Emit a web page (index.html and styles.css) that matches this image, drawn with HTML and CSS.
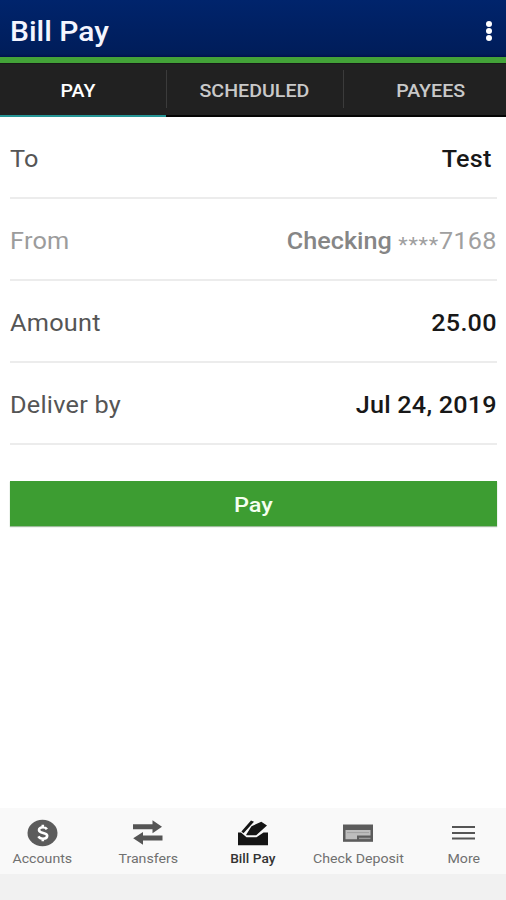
FILE: index.html
```
<!DOCTYPE html>
<html lang="en">

<head>
    <meta charset="UTF-8">
    <meta name="viewport" content="width=device-width, initial-scale=1.0">
    <title>Bill Pay</title>
    <link rel="stylesheet" href="styles.css">
</head>

<body>
    <header class="header">
        <h1 class="title">Bill Pay</h1>
        <button class="menu-btn" aria-label="Menu">
            <span class="dot"></span>
            <span class="dot"></span>
            <span class="dot"></span>
        </button>
    </header>

    <nav class="tabs">
        <a class="tab active" href="#"><span class="tab-text">PAY</span></a>
        <a class="tab" href="#"><span class="tab-text">SCHEDULED</span></a>
        <a class="tab tab-last" href="#"><span class="tab-text">PAYEES</span></a>
    </nav>

    <main class="content">
        <div class="row">
            <span class="label">To</span>
            <span class="value test">Test</span>
        </div>
        <div class="row disabled">
            <span class="label">From</span>
            <span class="value account"><span class="account-name">Checking</span> <span class="stars">****</span>7168</span>
        </div>
        <div class="row">
            <span class="label">Amount</span>
            <span class="value">25.00</span>
        </div>
        <div class="row">
            <span class="label">Deliver by</span>
            <span class="value">Jul 24, 2019</span>
        </div>
        <button class="pay-btn"><span class="pay-text">Pay</span></button>
    </main>

    <nav class="bottom-nav">
        <a class="nav-item" href="#">
            <svg class="icon" width="32" height="28" viewBox="0 0 32 28">
                <ellipse cx="15.5" cy="14" rx="15" ry="13.2" fill="#5c5c5c" />
                <path d="M19.9 10.3c-.8-1.3-2.2-2-4-2-2.3 0-3.9 1-3.9 2.7 0 4 8.2 1.9 8.2 5.8 0 1.8-1.7 2.9-4.2 2.9-2.1 0-3.7-.8-4.6-2.3M15.8 5.8v3M15.8 19v3.2" fill="none" stroke="#fff" stroke-width="2.6" />
            </svg>
            <span class="nav-text">Accounts</span>
        </a>
        <a class="nav-item" href="#">
            <svg class="icon" width="32" height="28" viewBox="0 0 32 28">
                <path d="M1 5.2h19.5V1.3L30 7.8l-9.5 6.4v-4H1zM30.5 16.6H11v-3.7L1.2 19.3l9.8 6.4v-4.1h19.5z" fill="#555" />
            </svg>
            <span class="nav-text">Transfers</span>
        </a>
        <a class="nav-item current" href="#">
            <svg class="icon" width="32" height="28" viewBox="0 0 32 28">
                <path d="M1 13.5h3l5.5 4.8h10l7-4.8H31v12.7H1z" fill="#151515" />
                <path d="M9.3 15.5L14.5 7.2l9.8-4.4 5.7 3.8-10.8 9.6H9.3zM4.4 12.4L14 1.5l3 1.2L6.5 14.2z" fill="#151515" />
            </svg>
            <span class="nav-text">Bill Pay</span>
        </a>
        <a class="nav-item" href="#">
            <svg class="icon" width="32" height="28" viewBox="0 0 32 28">
                <path d="M1 5.5h30v17.3H1z" fill="#5c5c5c" />
                <path d="M3.5 11h25v5.5h-25zM3.5 16.5H15v3.7H3.5z" fill="#bdbdbd" />
                <path d="M5 13.6h22" stroke="#a0a0a0" />
                <path d="M17 19.4h11.5" stroke="#9b9b9b" stroke-width="1.4" />
            </svg>
            <span class="nav-text">Check Deposit</span>
        </a>
        <a class="nav-item" href="#">
            <svg class="icon" width="32" height="28" viewBox="0 0 32 28">
                <path d="M5 8h23M5 14h23M5 19.6h23" stroke="#555" stroke-width="2" />
            </svg>
            <span class="nav-text">More</span>
        </a>
    </nav>
</body>

</html>
```
FILE: styles.css
```
* {
    box-sizing: border-box;
}

body {
    margin: 0;
    height: 900px;
    display: flex;
    flex-direction: column;
    font-family: Roboto, "Liberation Sans", sans-serif;
    background-color: #fff;
    overflow: hidden;
}

a {
    text-decoration: none;
}

/* Header */
.header {
    height: 63px;
    padding: 0 14px 0 10px;
    display: flex;
    justify-content: space-between;
    align-items: center;
    background: linear-gradient(#00246c, #001d5a 54px, #00104a 57px);
    border-bottom: 6px solid #43a338;
}

.title {
    margin: 7px 0 0;
    color: #f4f5ff;
    font-size: 27px;
    font-weight: 500;
    line-height: 32px;
    transform: scaleX(1.11);
    transform-origin: left;
}

.menu-btn {
    margin-top: 5px;
    padding: 0;
    border: none;
    background: none;
    display: flex;
    flex-direction: column;
    gap: 1px;
    cursor: pointer;
}

.dot {
    width: 6px;
    height: 6px;
    border-radius: 50%;
    background: #fff;
}

/* Tabs */
.tabs {
    height: 54px;
    display: grid;
    grid-template-columns: 166px 177px 163px;
    background: #212121;
    border-top: 1px solid #161b16;
}

.tab {
    display: flex;
    align-items: center;
    justify-content: center;
    padding-top: 2px;
    color: #c9c9c9;
    font-size: 18px;
    font-weight: 500;
    border-bottom: 2px solid #050505;
    background: linear-gradient(#3b3b3b, #3b3b3b) left 6px / 1px 38px no-repeat;
}

.tab-text {
    transform: scaleX(1.09);
}

.tab.active {
    padding-right: 10px;
    color: #fff;
    border-bottom-color: #259596;
    background: none;
}

.tab-last {
    padding-left: 12px;
}

/* Payment form */
.content {
    flex: 1;
    padding: 0 9px 0 10px;
}

.row {
    height: 81.8px;
    padding-top: 5px;
    display: flex;
    justify-content: space-between;
    align-items: center;
    border-bottom: 2px solid #ececec;
    font-size: 23px;
}

.row:first-child {
    height: 82.2px;
}

.label {
    color: #555;
    letter-spacing: 0.2px;
    transform: scaleX(1.1);
    transform-origin: left;
}

.value {
    color: #181818;
    font-weight: 500;
    letter-spacing: 0.2px;
    transform: scaleX(1.095);
    transform-origin: right;
}

.test {
    margin-right: 5px;
}

.disabled .label {
    color: #9c9c9c;
}

.account {
    color: #a0a0a0;
    font-weight: 400;
}

.account-name {
    color: #868686;
    font-weight: 500;
    letter-spacing: 0;
}

.stars {
    font-size: 20px;
    line-height: 1;
    vertical-align: -3px;
    letter-spacing: 0.7px;
}

.pay-btn {
    width: 100%;
    height: 45px;
    margin-top: 36px;
    padding: 3px 0 0;
    color: #f4fff0;
    background: #3d9d32;
    border: none;
    box-shadow: 0 1px 1px #9dbb9a;
    font-family: inherit;
    font-size: 21px;
    font-weight: 500;
    cursor: pointer;
}

.pay-text {
    display: inline-block;
    transform: scaleX(1.12);
}

/* Bottom navigation */
.bottom-nav {
    height: 92px;
    display: grid;
    grid-template-columns: repeat(5, 1fr);
    padding-top: 11px;
    margin: 0 -10px;
    background: #f9f9f9;
    border-bottom: 26px solid #f1f1f1;
}

.nav-item {
    display: flex;
    flex-direction: column;
    align-items: center;
    color: #707070;
}

.nav-text {
    margin-top: 4px;
    font-size: 12px;
    line-height: 16px;
    white-space: nowrap;
    transform: scaleX(1.18);
}

.current {
    color: #333;
    font-weight: 500;
}

.current .nav-text {
    transform: scaleX(1.14);
}
```
